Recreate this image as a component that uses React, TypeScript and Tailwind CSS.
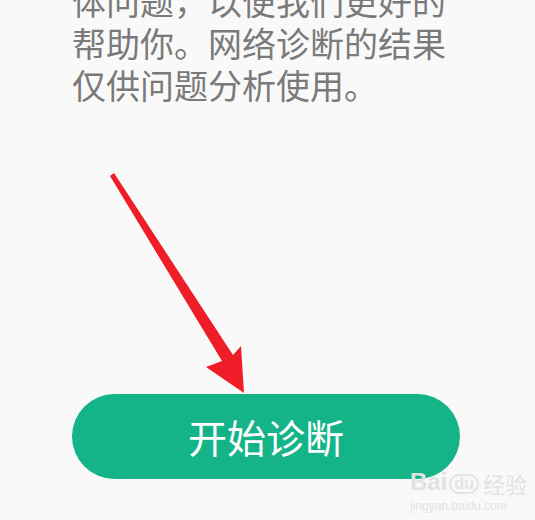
const Arrow = () => (
  <svg
    className="absolute left-0 top-0 pointer-events-none"
    width="535"
    height="520"
    viewBox="0 0 535 520"
  >
    <path
      d="M110 176 L114 173 L233 355 L241 346 L244 393 L206 367 L222 361 Z"
      fill="#ef1d28"
    />
  </svg>
);

export default function App() {
  return (
    <div
      className="relative w-[535px] h-[520px] overflow-hidden bg-[#f9f9f9]"
      style={{ fontFamily: '"Noto Sans CJK SC", "Noto Sans", sans-serif' }}
    >
      <div className="mt-[-20px] pl-[72px] pr-[60px] text-[34px] leading-[42px] text-[#7a7a7a]">
        <p>体问题，以便我们更好的</p>
        <p>帮助你。网络诊断的结果</p>
        <p>仅供问题分析使用。</p>
      </div>

      <div className="mt-[288px] px-[72px] w-[532px]">
        <button className="w-full h-[85px] rounded-full bg-[#15b488] text-white text-[39px] flex items-center justify-center">
          开始诊断
        </button>
      </div>

      <Arrow />

      <div className="absolute left-[410px] top-[470px] flex flex-col items-start text-[#e2e2e2] leading-none">
        <div className="flex items-end gap-[2px]">
          <span className="text-[24px] font-bold" style={{ fontFamily: '"Liberation Sans", sans-serif' }}>
            Bai
          </span>
          <span className="text-[16px] font-bold px-[3px] rounded-full border-2 border-[#e2e2e2]" style={{ fontFamily: '"Liberation Sans", sans-serif' }}>
            du
          </span>
          <span className="text-[22px] ml-[2px]">经验</span>
        </div>
        <span className="text-[12px] mt-[6px]" style={{ fontFamily: '"Liberation Sans", sans-serif' }}>
          jingyan.baidu.com
        </span>
      </div>
    </div>
  );
}
